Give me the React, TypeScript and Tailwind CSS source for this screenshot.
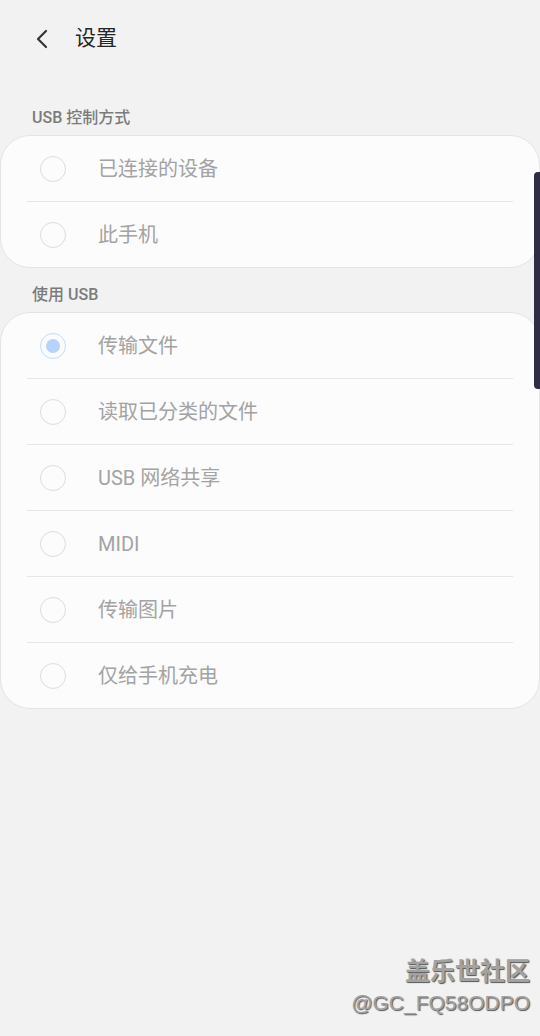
import { ChevronLeft } from 'lucide-react';

type Option = { id: string; label: string; checked?: boolean };

const controlOptions: Option[] = [
  { id: 'connected', label: '已连接的设备' },
  { id: 'phone', label: '此手机' },
];

const usbOptions: Option[] = [
  { id: 'mtp', label: '传输文件', checked: true },
  { id: 'sorted', label: '读取已分类的文件' },
  { id: 'tether', label: 'USB 网络共享' },
  { id: 'midi', label: 'MIDI' },
  { id: 'ptp', label: '传输图片' },
  { id: 'charge', label: '仅给手机充电' },
];

const font = "font-['Roboto','Noto_Sans_CJK_SC',sans-serif]";

function Radio({ checked }: { checked?: boolean }) {
  if (checked) {
    return (
      <div className="flex h-[26px] w-[26px] items-center justify-center rounded-full border-[1.5px] border-[#c3dcf7]">
        <div className="h-[14px] w-[14px] rounded-full bg-[#b5d3fb]" />
      </div>
    );
  }
  return <div className="h-[26px] w-[26px] rounded-full border-[1.5px] border-[#dcdcdc]" />;
}

function OptionCard({ options }: { options: Option[] }) {
  return (
    <div className="rounded-[30px] border border-[#e4e4e4] bg-[#fcfcfc]">
      {options.map((option, index) => (
        <div key={option.id} className="px-[26px]">
          {index > 0 && <div className="h-px bg-[#e6e6e6]" />}
          <div className="flex h-[65px] items-center">
            <div className="flex w-[71px] pl-[13px]">
              <Radio checked={option.checked} />
            </div>
            <span className="text-[20px] text-[#a3a3a3]">{option.label}</span>
          </div>
        </div>
      ))}
    </div>
  );
}

function SectionLabel({ children }: { children: React.ReactNode }) {
  return (
    <div className="px-[32px] pb-[7px] text-[16px] font-medium leading-[20px] text-[#7b7b7b]">
      {children}
    </div>
  );
}

export default function App() {
  return (
    <div className={`relative h-[1036px] w-[540px] overflow-hidden bg-[#f2f2f2] ${font}`}>
      <div className="flex h-[78px] items-center pl-[26px]">
        <ChevronLeft className="h-[32px] w-[32px] text-[#333]" strokeWidth={1.6} />
        <span className="ml-[17px] text-[21px] text-[#252525]">设置</span>
      </div>

      <div className="pt-[30px]">
        <SectionLabel>USB 控制方式</SectionLabel>
        <OptionCard options={controlOptions} />
        <div className="pt-[17px]">
          <SectionLabel>使用 USB</SectionLabel>
        </div>
        <OptionCard options={usbOptions} />
      </div>

      {/* scroll indicator */}
      <div className="absolute right-0 top-[172px] h-[217px] w-[6px] rounded-l-[4px] bg-[#2f2d45]" />

      {/* watermark */}
      <div className="absolute bottom-[19px] right-[10px] flex flex-col items-end text-[#a2a2a2] [text-shadow:1px_1px_1px_#555]">
        <span className="text-[25px] font-bold leading-[34px]">盖乐世社区</span>
        <span className="font-['Liberation_Sans',sans-serif] text-[21px] leading-[28px]">@GC_FQ58ODPO</span>
      </div>
    </div>
  );
}
